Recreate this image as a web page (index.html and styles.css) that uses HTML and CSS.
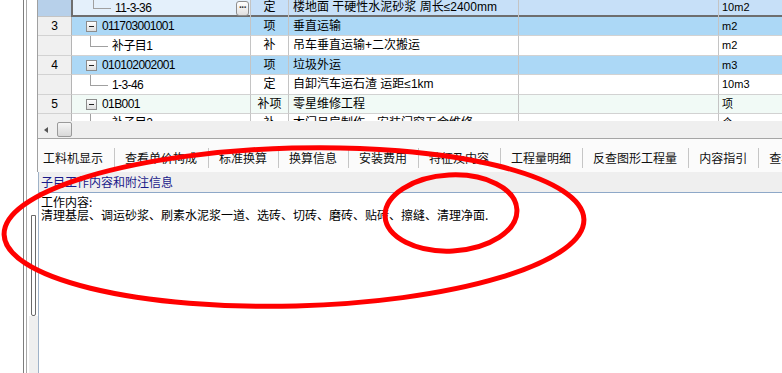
FILE: index.html
```
<!DOCTYPE html>
<html lang="zh">
  <head>
    <meta charset="UTF-8" />
    <title>子目工作内容</title>
    <link rel="stylesheet" href="styles.css">
  </head>
  <body>
    <div class="app">
      <div class="gutter"></div>
      <div class="rail"></div>
      <div class="main">
        <div class="upper">
          <div class="lspace"></div>
          <div class="pane">
            <div class="rows">
              <div class="row row-sel">
                <div class="c num"></div>
                <div class="c code edit"><span class="elbow"></span>11-3-36<span class="dots">···</span></div>
                <div class="c type">定</div>
                <div class="c name">楼地面 干硬性水泥砂浆 周长≤2400mm</div>
                <div class="c blank"></div>
                <div class="c unit">10m2</div>
              </div>
              <div class="row row-item">
                <div class="c num">3</div>
                <div class="c code"><span class="tog"></span>011703001001</div>
                <div class="c type">项</div>
                <div class="c name">垂直运输</div>
                <div class="c blank"></div>
                <div class="c unit">m2</div>
              </div>
              <div class="row tall">
                <div class="c num"></div>
                <div class="c code"><span class="elbow"></span>补子目1</div>
                <div class="c type">补</div>
                <div class="c name">吊车垂直运输+二次搬运</div>
                <div class="c blank"></div>
                <div class="c unit">m2</div>
              </div>
              <div class="row row-item">
                <div class="c num">4</div>
                <div class="c code"><span class="tog"></span>010102002001</div>
                <div class="c type">项</div>
                <div class="c name">垃圾外运</div>
                <div class="c blank"></div>
                <div class="c unit">m3</div>
              </div>
              <div class="row tall">
                <div class="c num"></div>
                <div class="c code"><span class="elbow"></span>1-3-46</div>
                <div class="c type">定</div>
                <div class="c name">自卸汽车运石渣 运距≤1km</div>
                <div class="c blank"></div>
                <div class="c unit">10m3</div>
              </div>
              <div class="row row-extra">
                <div class="c num">5</div>
                <div class="c code"><span class="tog"></span>01B001</div>
                <div class="c type">补项</div>
                <div class="c name">零星维修工程</div>
                <div class="c blank"></div>
                <div class="c unit">项</div>
              </div>
              <div class="row">
                <div class="c num"></div>
                <div class="c code"><span class="elbow"></span>补子目2</div>
                <div class="c type">补</div>
                <div class="c name">木门吊扇制作、安装门窗五金维修</div>
                <div class="c blank"></div>
                <div class="c unit">个</div>
              </div>
            </div>
            <div class="hscroll">
              <span class="arrow"></span>
              <span class="thumb"></span>
            </div>
            <div class="tabs">
              <div class="tab">工料机显示</div>
              <div class="tab">查看单价构成</div>
              <div class="tab">标准换算</div>
              <div class="tab">换算信息</div>
              <div class="tab">安装费用</div>
              <div class="tab">特征及内容</div>
              <div class="tab">工程量明细</div>
              <div class="tab">反查图形工程量</div>
              <div class="tab">内容指引</div>
              <div class="tab">查看</div>
            </div>
          </div>
        </div>
        <div class="lower">
          <div class="vscroll">
            <div class="vs-top"></div>
            <div class="vs-thumb"></div>
            <div class="vs-rest"></div>
          </div>
          <div class="detail">
            <div class="detail-head">子目工作内容和附注信息</div>
            <div class="detail-body">
              <div>工作内容:</div>
              <div>清理基层、调运砂浆、刷素水泥浆一道、选砖、切砖、磨砖、贴砖、擦缝、清理净面.</div>
            </div>
          </div>
        </div>
      </div>

      <!-- red hand-drawn marks over the screenshot -->
      <svg class="marks" width="782" height="373" viewBox="0 0 782 373">
        <ellipse cx="294" cy="227" rx="290" ry="79" transform="rotate(-1.5 294 227)" />
        <ellipse cx="451" cy="213" rx="66" ry="38" transform="rotate(-3 451 213)" />
      </svg>
    </div>
  </body>
</html>
```
FILE: styles.css
```
body {
  margin: 0;
  background: #fff;
  overflow: hidden;
  font-family: "Liberation Sans", "Noto Sans CJK SC", sans-serif;
  font-size: 12px;
  color: #000;
}
.app {
  position: relative;
  display: flex;
  width: 782px;
  height: 373px;
  overflow: hidden;
}
.gutter {
  width: 23px;
  border-right: 1px solid #7d7d7d;
  flex: none;
}
.rail {
  width: 2px;
  border-right: 1px solid #a8a8a8;
  flex: none;
}
.main {
  flex: 1;
  display: flex;
  flex-direction: column;
  min-width: 0;
}
.upper {
  display: flex;
  height: 172px;
  flex: none;
}
.lspace {
  width: 10px;
  flex: none;
}
.pane {
  flex: 1;
  min-width: 0;
  border-left: 1px solid #a0a0a0;
  display: flex;
  flex-direction: column;
}

/* grid */
.rows {
  height: 121px;
  overflow: hidden;
  flex: none;
}
.row {
  display: flex;
  height: 19px;
  background: #fff;
}
.row.tall {
  height: 20px;
}
.row-sel {
  height: 17px;
  background: #c7e0f8;
}
.row-item {
  background: #acd8f6;
}
.row-extra {
  background: #f1faf6;
}
.c {
  box-sizing: border-box;
  flex: none;
  height: 100%;
  border-right: 1px solid #c4c4c4;
  border-bottom: 1px solid #d2d2d2;
  line-height: 18px;
  white-space: nowrap;
  overflow: hidden;
}
.row-sel .c {
  border-bottom: none;
  box-shadow: inset 0 -2px 0 #6e6e6e;
  line-height: 15px;
}
.row-sel .num {
  box-shadow: none;
  border-bottom: 1px solid #c4c4c4;
  background: #b7d0ea;
}
.num {
  width: 34px;
  background: #f0f0f0;
  text-align: center;
  border-right-color: #b4b4b4;
}
.code {
  width: 179px;
  display: flex;
  align-items: center;
  padding-left: 14px;
  letter-spacing: -0.6px;
}
.row-sel .code {
  border-left: 2px solid #6e6e6e;
  padding-left: 16px;
  margin-left: -1px;
  width: 180px;
}
.code.edit {
  background: #e4f0fb;
}
.type {
  width: 38px;
  text-align: center;
}
.name {
  width: 230px;
  padding-left: 4px;
}
.blank {
  width: 200px;
}
.unit {
  flex: 1;
  padding-left: 3px;
  border-right: none;
  font-size: 11px;
}
.tog {
  width: 9px;
  height: 9px;
  border: 1px solid #8c8c8c;
  margin-right: 5px;
  flex: none;
  background: linear-gradient(#222, #222) center / 5px 1px no-repeat,
    linear-gradient(#ffffff, #dedede);
}
.elbow {
  align-self: flex-start;
  width: 17px;
  height: 10px;
  margin-left: 4px;
  margin-right: 4px;
  border-left: 1px solid #a0a0a0;
  border-bottom: 1px solid #a0a0a0;
  flex: none;
}
.row-sel .elbow {
  height: 8px;
}
.dots {
  margin-left: auto;
  margin-right: 1px;
  width: 11px;
  height: 13px;
  border: 1px solid #8e8e8e;
  border-radius: 3px;
  background: linear-gradient(#ffffff, #e0e0e0);
  font-size: 10px;
  font-weight: bold;
  line-height: 11px;
  text-align: center;
  letter-spacing: -1px;
  color: #333;
}

/* horizontal scrollbar */
.hscroll {
  height: 17px;
  border-bottom: 1px solid #a5a5a5;
  background: #efefef;
  display: flex;
  align-items: center;
  flex: none;
}
.arrow {
  width: 0;
  height: 0;
  margin-left: 6px;
  border-top: 3px solid transparent;
  border-bottom: 3px solid transparent;
  border-right: 4px solid #555;
}
.thumb {
  width: 13px;
  height: 13px;
  margin-left: 9px;
  border: 1px solid #9a9a9a;
  border-radius: 2px;
  background: linear-gradient(#f6f6f6, #d8d8d8);
}

/* tabs */
.tabs {
  height: 33px;
  box-sizing: border-box;
  padding-top: 9px;
  display: flex;
  background: #fbfbfb;
  flex: none;
  font-family: "Noto Sans CJK SC", sans-serif;
}
.tab {
  height: 20px;
  line-height: 20px;
  padding: 0 11px 0 10px;
  border-left: 1px solid #c6c6c6;
  white-space: nowrap;
  color: #111;
}
.tab:first-child {
  border-left: none;
  padding-left: 5px;
}

/* lower detail */
.lower {
  flex: 1;
  display: flex;
  min-height: 0;
}
.vscroll {
  width: 11px;
  flex: none;
  display: flex;
  flex-direction: column;
}
.vs-top {
  height: 43px;
}
.vs-thumb {
  height: 99px;
  width: 3px;
  margin-left: 4px;
  border: 1px solid #6a6a6a;
  border-radius: 0 0 2px 2px;
  background: #fff;
}
.vs-rest {
  flex: 1;
  margin-left: 2px;
  background: #efefef;
}
.detail {
  flex: 1;
  border-left: 1px solid #9fb2c8;
  display: flex;
  flex-direction: column;
  font-family: "Noto Sans CJK SC", sans-serif;
}
.detail-head {
  height: 20px;
  line-height: 20px;
  padding-left: 2px;
  background: #efefef;
  border-bottom: 1px solid #8ea8c8;
  color: #1a1a8a;
}
.detail-body {
  padding: 2px 2px 0;
  line-height: 13px;
}

.marks {
  position: absolute;
  left: 0;
  top: 0;
  pointer-events: none;
}
.marks ellipse {
  fill: none;
  stroke: #ff0000;
  stroke-width: 5;
}
```
